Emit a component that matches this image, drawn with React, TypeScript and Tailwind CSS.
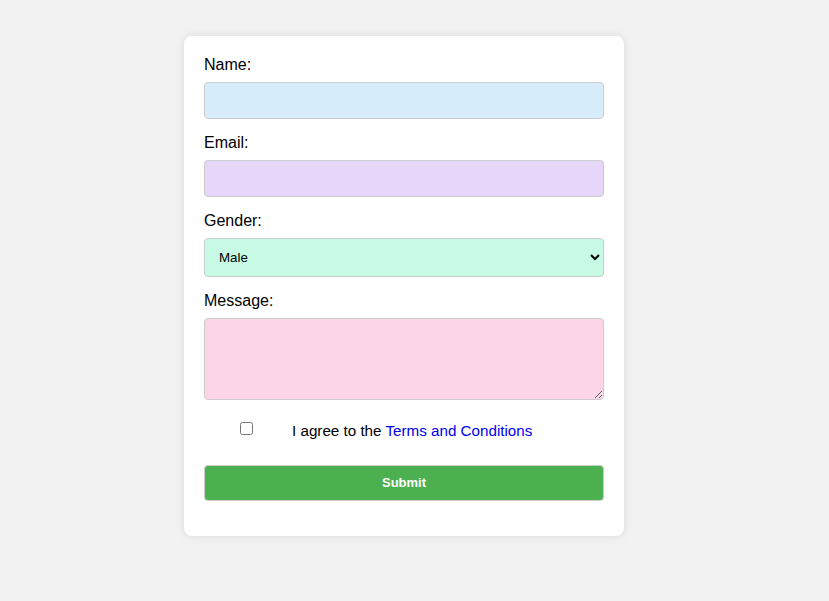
import { useState } from "react";

const inputBase =
  "block w-full px-[10px] py-[10px] border border-[#cccccc] rounded-[4px] text-[13.333px] leading-[15px] text-black outline-none";

export default function App() {
  const [agree, setAgree] = useState(false);

  return (
    <div className="min-h-[601px] bg-[#f2f2f2] pt-[36px] pl-[184px] font-['Liberation_Sans',Arial,sans-serif]">
      <form className="w-[440px] bg-white rounded-[8px] p-[20px] shadow-[0_0_10px_rgba(0,0,0,0.1)]">
        <label className="block text-[16px] leading-[18px] text-black mb-[8px]">Name:</label>
        <input type="text" className={`${inputBase} h-[37px] bg-[#d6ecfa] mb-[15px]`} />

        <label className="block text-[16px] leading-[18px] text-black mb-[8px]">Email:</label>
        <input type="email" className={`${inputBase} h-[37px] bg-[#e6d7fa] mb-[15px]`} />

        <label className="block text-[16px] leading-[18px] text-black mb-[8px]">Gender:</label>
        <select className={`${inputBase} h-[39px] py-0 bg-[#c6fae4] mb-[15px]`} defaultValue="male">
          <option value="male">Male</option>
          <option value="female">Female</option>
          <option value="other">Other</option>
        </select>

        <label className="block text-[16px] leading-[18px] text-black mb-[8px]">Message:</label>
        <textarea className={`${inputBase} h-[82px] bg-[#fcd5e8] mb-[15px]`} />

        <div className="flex items-start h-[35px] pt-[7px] mb-[15px]">
          <div className="w-[85px] flex justify-center">
            <input
              type="checkbox"
              checked={agree}
              onChange={(e) => setAgree(e.target.checked)}
              className="block w-[13px] h-[13px] m-0"
            />
          </div>
          <span className="ml-[3px] text-[15.2px] leading-[18px] text-black">
            I agree to the <a href="#" className="text-[#0000ee]">Terms and Conditions</a>
          </span>
        </div>

        <button
          type="submit"
          className="block w-full h-[36px] mb-[15px] bg-[#4caf50] border border-[#cccccc] rounded-[4px] text-white text-[13px] font-bold"
        >
          Submit
        </button>
      </form>
    </div>
  );
}
